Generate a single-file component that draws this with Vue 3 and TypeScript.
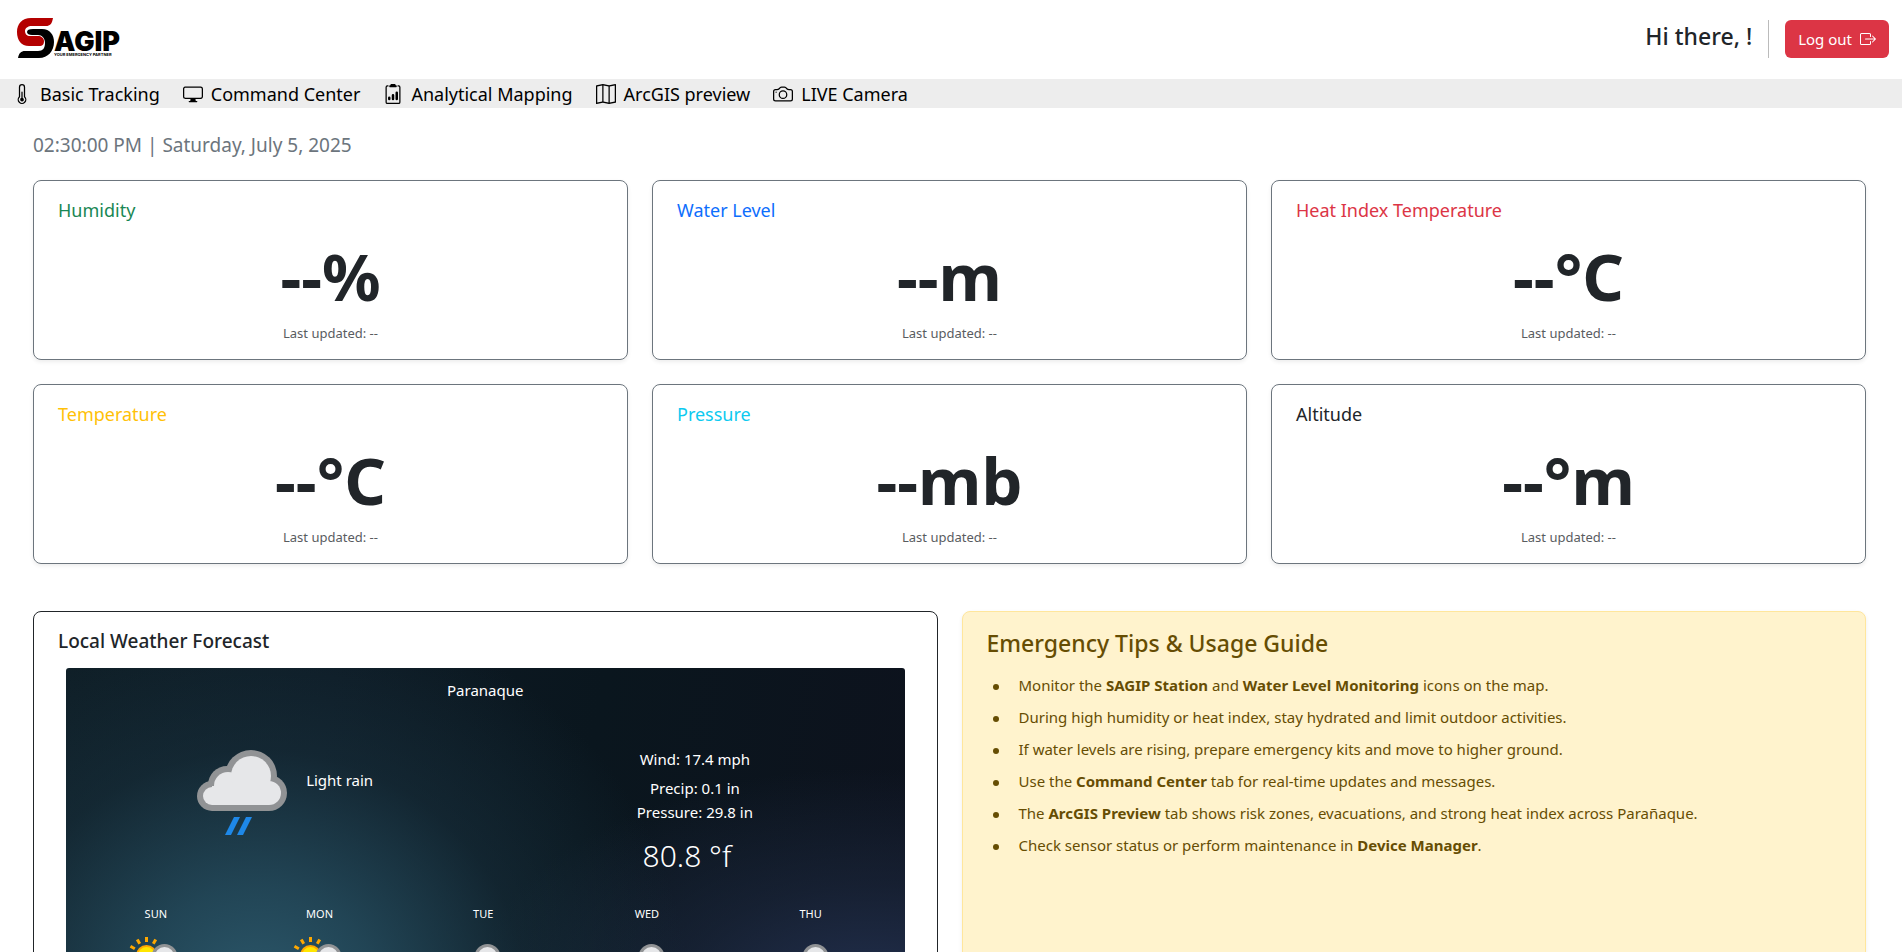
<script setup lang="ts">
interface NavItem {
  label: string
  paths: string[]
}

interface Reading {
  title: string
  unit: string
  tone: string
}

interface Day {
  name: string
  sunny: boolean
}

const navItems: NavItem[] = [
  {
    label: 'Basic Tracking',
    paths: [
      'M9.5 12.5a1.5 1.5 0 1 1-2-1.415V6.5a.5.5 0 0 1 1 0v4.585a1.5 1.5 0 0 1 1 1.415',
      'M5.5 2.5a2.5 2.5 0 0 1 5 0v7.55a3.5 3.5 0 1 1-5 0zM8 1a1.5 1.5 0 0 0-1.5 1.5v7.987l-.167.15a2.5 2.5 0 1 0 3.333 0l-.166-.15V2.5A1.5 1.5 0 0 0 8 1',
    ],
  },
  {
    label: 'Command Center',
    paths: [
      'M0 4s0-2 2-2h12s2 0 2 2v6s0 2-2 2h-4q0 1 .25 1.5H11a.5.5 0 0 1 0 1H5a.5.5 0 0 1 0-1h.75Q6 13 6 12H2s-2 0-2-2zm1.398-.855a.76.76 0 0 0-.254.302A1.5 1.5 0 0 0 1 4.01V10c0 .325.078.502.145.602q.105.156.302.254a1.5 1.5 0 0 0 .538.143L2.01 11H14c.325 0 .502-.078.602-.145a.76.76 0 0 0 .254-.302 1.5 1.5 0 0 0 .143-.538L15 9.99V4c0-.325-.078-.502-.145-.602a.76.76 0 0 0-.302-.254A1.5 1.5 0 0 0 13.99 3H2c-.325 0-.502.078-.602.145',
    ],
  },
  {
    label: 'Analytical Mapping',
    paths: [
      'M9.5 0a.5.5 0 0 1 .5.5.5.5 0 0 0 .5.5.5.5 0 0 1 .5.5V2a.5.5 0 0 1-.5.5h-5A.5.5 0 0 1 5 2v-.5a.5.5 0 0 1 .5-.5.5.5 0 0 0 .5-.5.5.5 0 0 1 .5-.5z',
      'M3 2.5a.5.5 0 0 1 .5-.5H4a.5.5 0 0 0 0-1h-.5A1.5 1.5 0 0 0 2 2.5v12A1.5 1.5 0 0 0 3.5 16h9a1.5 1.5 0 0 0 1.5-1.5v-12A1.5 1.5 0 0 0 12.5 1H12a.5.5 0 0 0 0 1h.5a.5.5 0 0 1 .5.5v12a.5.5 0 0 1-.5.5h-9a.5.5 0 0 1-.5-.5z',
      'M10 7a1 1 0 1 1 2 0v5a1 1 0 1 1-2 0zm-6 4a1 1 0 1 1 2 0v1a1 1 0 1 1-2 0zm4-3a1 1 0 0 0-1 1v3a1 1 0 1 0 2 0V9a1 1 0 0 0-1-1',
    ],
  },
  {
    label: 'ArcGIS preview',
    paths: [
      'M15.817.113A.5.5 0 0 1 16 .5v14a.5.5 0 0 1-.402.49l-5 1a.5.5 0 0 1-.196 0L5.5 15.01l-4.902.98A.5.5 0 0 1 0 15.5v-14a.5.5 0 0 1 .402-.49l5-1a.5.5 0 0 1 .196 0L10.5.99l4.902-.98a.5.5 0 0 1 .415.103M10 1.91l-4-.8v12.98l4 .8zm1 12.98 4-.8V1.11l-4 .8zm-6-.8V1.11l-4 .8v12.98z',
    ],
  },
  {
    label: 'LIVE Camera',
    paths: [
      'M15 12a1 1 0 0 1-1 1H2a1 1 0 0 1-1-1V6a1 1 0 0 1 1-1h1.172a3 3 0 0 0 2.12-.879l.83-.828A1 1 0 0 1 6.827 3h2.344a1 1 0 0 1 .707.293l.828.828A3 3 0 0 0 12.828 5H14a1 1 0 0 1 1 1zM2 4a2 2 0 0 0-2 2v6a2 2 0 0 0 2 2h12a2 2 0 0 0 2-2V6a2 2 0 0 0-2-2h-1.172a2 2 0 0 1-1.414-.586l-.828-.828A2 2 0 0 0 9.172 2H6.828a2 2 0 0 0-1.414.586l-.828.828A2 2 0 0 1 3.172 4z',
      'M8 11a2.5 2.5 0 1 1 0-5 2.5 2.5 0 0 1 0 5m0 1a3.5 3.5 0 1 0 0-7 3.5 3.5 0 0 0 0 7M3 6.5a.5.5 0 1 1-1 0 .5.5 0 0 1 1 0',
    ],
  },
]

const readings: Reading[] = [
  { title: 'Humidity', unit: '%', tone: 'success' },
  { title: 'Water Level', unit: 'm', tone: 'primary' },
  { title: 'Heat Index Temperature', unit: '°C', tone: 'danger' },
  { title: 'Temperature', unit: '°C', tone: 'warning' },
  { title: 'Pressure', unit: 'mb', tone: 'info' },
  { title: 'Altitude', unit: '°m', tone: 'dark' },
]

const days: Day[] = [
  { name: 'SUN', sunny: true },
  { name: 'MON', sunny: true },
  { name: 'TUE', sunny: false },
  { name: 'WED', sunny: false },
  { name: 'THU', sunny: false },
]

const rays = [-90, -60, -30, 0, 30, 60]
</script>

<template>
  <!-- Cloud shapes shared by every forecast icon -->
  <svg class="defs" aria-hidden="true">
    <defs>
      <g id="cloud">
        <g fill="#919395">
          <circle cx="34" cy="80" r="15" />
          <circle cx="49" cy="69" r="19" />
          <circle cx="73" cy="60" r="26" />
          <circle cx="91" cy="77" r="18" />
          <rect x="34" y="66" width="57" height="29" />
        </g>
        <g fill="#e6e7e9">
          <circle cx="34" cy="80" r="9" />
          <circle cx="50" cy="70" r="14" />
          <circle cx="73" cy="60" r="20" />
          <circle cx="91" cy="77" r="12" />
          <rect x="34" y="70" width="57" height="19" />
        </g>
      </g>
      <g id="rain" fill="#1e88e8">
        <path d="M56 101h6l-9 18h-6z" />
        <path d="M68 101h6l-9 18h-6z" />
      </g>
    </defs>
  </svg>

  <div class="page">
    <header class="topbar">
      <a class="brand" href="#" aria-label="SAGIP home">
        <svg width="106" height="42" viewBox="0 0 106 42">
          <path
            fill="#b40000"
            d="M36 0H14C5 0 0 6 0 14c0 8 4 14 12 14h10c4 0 5-2 5-5s-3-5-6-5h-8c-3 0-5-2-5-5s3-5 7-5h14c4 0 6-2 7-8z"
          />
          <path
            fill="#000"
            d="M16 11h9c8 0 12 6 12 13 0 9-6 16-15 16H1c1-5 3-7 7-7h13c5 0 7-3 7-8s-3-8-7-8h-6c-3 0-5-1-5-3s2-3 6-3z"
          />
          <text class="logo-name" x="37" y="33">AGIP</text>
          <text class="logo-tag" x="37" y="38">YOUR EMERGENCY PARTNER</text>
        </svg>
      </a>
      <div class="account">
        <h1 class="greeting">Hi there, !</h1>
        <div class="rule"></div>
        <button class="logout" type="button">
          Log out
          <svg width="16" height="16" viewBox="0 0 16 16" fill="currentColor" aria-hidden="true">
            <path
              fill-rule="evenodd"
              d="M10 12.5a.5.5 0 0 1-.5.5h-8a.5.5 0 0 1-.5-.5v-9a.5.5 0 0 1 .5-.5h8a.5.5 0 0 1 .5.5v2a.5.5 0 0 0 1 0v-2A1.5 1.5 0 0 0 9.5 2h-8A1.5 1.5 0 0 0 0 3.5v9A1.5 1.5 0 0 0 1.5 14h8a1.5 1.5 0 0 0 1.5-1.5v-2a.5.5 0 0 0-1 0z"
            />
            <path
              fill-rule="evenodd"
              d="M15.854 8.354a.5.5 0 0 0 0-.708l-3-3a.5.5 0 0 0-.708.708L14.293 7.5H5.5a.5.5 0 0 0 0 1h8.793l-2.147 2.146a.5.5 0 0 0 .708.708z"
            />
          </svg>
        </button>
      </div>
    </header>

    <nav class="nav">
      <a v-for="item in navItems" :key="item.label" class="nav-link" href="#">
        <svg width="20" height="20" viewBox="0 0 16 16" fill="currentColor" aria-hidden="true">
          <path v-for="d in item.paths" :key="d" :d="d" />
        </svg>
        {{ item.label }}
      </a>
    </nav>

    <main class="content">
      <p class="clock">02:30:00 PM | Saturday, July 5, 2025</p>

      <section class="readings">
        <article v-for="r in readings" :key="r.title" class="card">
          <h2 class="card-title" :class="r.tone">{{ r.title }}</h2>
          <p class="value">--{{ r.unit }}</p>
          <p class="updated">Last updated: --</p>
        </article>
      </section>

      <section class="lower">
        <article class="forecast">
          <h2 class="forecast-title">Local Weather Forecast</h2>
          <div class="widget">
            <p class="place">Paranaque</p>
            <div class="now">
              <div class="sky">
                <svg width="128" height="128" viewBox="0 0 128 128" aria-hidden="true">
                  <use href="#cloud" />
                  <use href="#rain" />
                </svg>
                <span>Light rain</span>
              </div>
              <div class="stats">
                <p class="wind">Wind: 17.4 mph</p>
                <p>Precip: 0.1 in</p>
                <p>Pressure: 29.8 in</p>
                <p class="temp">80.8 °f</p>
              </div>
            </div>
            <ul class="days">
              <li v-for="day in days" :key="day.name">
                <span>{{ day.name }}</span>
                <svg width="64" height="64" viewBox="0 0 128 128" aria-hidden="true">
                  <template v-if="day.sunny">
                    <g transform="translate(45 57)">
                      <rect
                        v-for="a in rays"
                        :key="a"
                        x="-3"
                        y="-37"
                        width="6"
                        height="10"
                        fill="#ffa800"
                        :transform="`rotate(${a})`"
                      />
                      <circle r="21" fill="#ffa800" />
                      <circle r="17" fill="#ffe600" />
                    </g>
                    <use href="#cloud" x="8" />
                  </template>
                  <template v-else>
                    <use href="#cloud" />
                    <use href="#rain" />
                  </template>
                </svg>
              </li>
            </ul>
          </div>
        </article>

        <aside class="tips">
          <h2 class="tips-title">Emergency Tips &amp; Usage Guide</h2>
          <ul class="tips-list">
            <li>Monitor the <strong>SAGIP Station</strong> and <strong>Water Level Monitoring</strong> icons on the map.</li>
            <li>During high humidity or heat index, stay hydrated and limit outdoor activities.</li>
            <li>If water levels are rising, prepare emergency kits and move to higher ground.</li>
            <li>Use the <strong>Command Center</strong> tab for real-time updates and messages.</li>
            <li>The <strong>ArcGIS Preview</strong> tab shows risk zones, evacuations, and strong heat index across Parañaque.</li>
            <li>Check sensor status or perform maintenance in <strong>Device Manager</strong>.</li>
          </ul>
        </aside>
      </section>
    </main>
  </div>
</template>

<style>
html {
  scrollbar-width: none;
}

body {
  background: #fff;
}
</style>

<style scoped>
.defs {
  display: block;
  width: 0;
  height: 0;
}

.page {
  color: #212529;
  font-family: "Noto Sans", "Open Sans", sans-serif;
}

.page h1,
.page h2,
.page p,
.page ul {
  margin: 0;
}

.topbar {
  display: flex;
  align-items: center;
  justify-content: space-between;
  height: 79px;
  padding: 0 13px 2px 17px;
  box-sizing: border-box;
}

.brand svg {
  display: block;
}

.logo-name {
  font: 900 27px Inter, sans-serif;
  fill: #000;
}

.logo-tag {
  font: 700 4px Inter, sans-serif;
  fill: #000;
}

.account {
  display: flex;
  align-items: center;
  gap: 16px;
}

.greeting {
  font-size: 23px;
  font-weight: 500;
  line-height: 29px;
  padding-bottom: 4px;
}

.rule {
  width: 1px;
  height: 38px;
  background: #bbb;
}

.logout {
  display: flex;
  align-items: center;
  gap: 8px;
  height: 38px;
  padding: 0 13px;
  border: 0;
  border-radius: 6px;
  background: #dc3545;
  color: #fff;
  font: 15px "Noto Sans", "Open Sans", sans-serif;
  cursor: pointer;
}

.nav {
  display: flex;
  gap: 23px;
  padding: 1px 12px 0;
  background: #ededed;
}

.nav-link {
  display: flex;
  align-items: center;
  gap: 8px;
  color: #000;
  font-size: 18px;
  line-height: 28px;
  text-decoration: none;
}

.content {
  padding: 23px 36px 24px 33px;
}

.clock {
  color: #6c757d;
  font-size: 19px;
  line-height: 29px;
}

.readings {
  display: grid;
  grid-template-columns: repeat(3, 1fr);
  gap: 24px;
  margin-top: 20px;
}

.card {
  padding: 16px 24px;
  border: 1px solid #6c757d;
  border-radius: 8px;
  box-shadow: 0 2px 4px rgba(0, 0, 0, 0.075);
}

.card-title {
  font-size: 18px;
  font-weight: 400;
  line-height: 27px;
}

.success { color: #198754; }
.primary { color: #0d6efd; }
.danger { color: #dc3545; }
.warning { color: #ffc107; }
.info { color: #0dcaf0; }
.dark { color: #212529; }

.card .value {
  margin-top: 14px;
  font-size: 65px;
  font-weight: 700;
  line-height: 77px;
  text-align: center;
}

.card .updated {
  margin-top: 8px;
  color: #595c5f;
  font-size: 13px;
  line-height: 20px;
  text-align: center;
}

.lower {
  display: grid;
  grid-template-columns: repeat(2, 1fr);
  gap: 24px;
  margin-top: 47px;
}

.forecast,
.tips {
  padding: 16px 24px;
  border: 1px solid #212529;
  border-radius: 8px;
}

.tips {
  border-color: #ffe69c;
  background: #fff3cd;
  color: #664d03;
  box-shadow: 0 2px 4px rgba(0, 0, 0, 0.075);
}

.forecast-title {
  font-size: 19px;
  font-weight: 500;
  line-height: 26px;
}

.forecast .widget {
  margin: 14px 8px 8px;
  padding: 10px 0 24px;
  border-radius: 3px;
  background:
    radial-gradient(ellipse 430px 400px at 23% 330px, #2c586b 0%, rgba(38, 78, 96, 0.82) 28%, rgba(27, 54, 68, 0.45) 62%, transparent 100%),
    radial-gradient(ellipse 400px 230px at 96% 330px, #22304e 0%, rgba(30, 42, 66, 0.55) 50%, transparent 100%),
    linear-gradient(100deg, #0e1d25 0%, #0d1a24 30%, #0a161e 60%, #0d121d 100%);
  color: #fff;
  font-size: 15px;
  line-height: 24px;
}

.place {
  text-align: center;
}

.now {
  display: grid;
  grid-template-columns: repeat(2, 1fr);
  margin-top: 14px;
}

.sky {
  display: flex;
  align-items: center;
  justify-content: center;
  height: 128px;
}

.stats {
  padding-top: 31px;
  text-align: center;
}

.stats .wind {
  margin-bottom: 5px;
}

.stats .temp {
  margin-top: 12px;
  padding-right: 16px;
  font-size: 30px;
  font-weight: 300;
  line-height: 40px;
}

.page .days {
  display: grid;
  grid-template-columns: repeat(5, 1fr);
  margin-top: 30px;
  padding: 0 12px 0 8px;
  list-style: none;
}

.days li {
  display: flex;
  flex-direction: column;
  align-items: center;
  gap: 5px;
  font-size: 11px;
  line-height: 16px;
}

.tips-title {
  font-size: 23px;
  font-weight: 500;
  line-height: 30px;
}

.page .tips-list {
  display: grid;
  gap: 8px;
  margin-top: 15px;
  padding-left: 32px;
  font-size: 15px;
  line-height: 24px;
  list-style: none;
}

.tips-list li::before {
  content: "";
  display: inline-block;
  width: 6px;
  height: 6px;
  margin: 0 20px 0 -26px;
  border-radius: 50%;
  background: #664d03;
  vertical-align: middle;
}
</style>
